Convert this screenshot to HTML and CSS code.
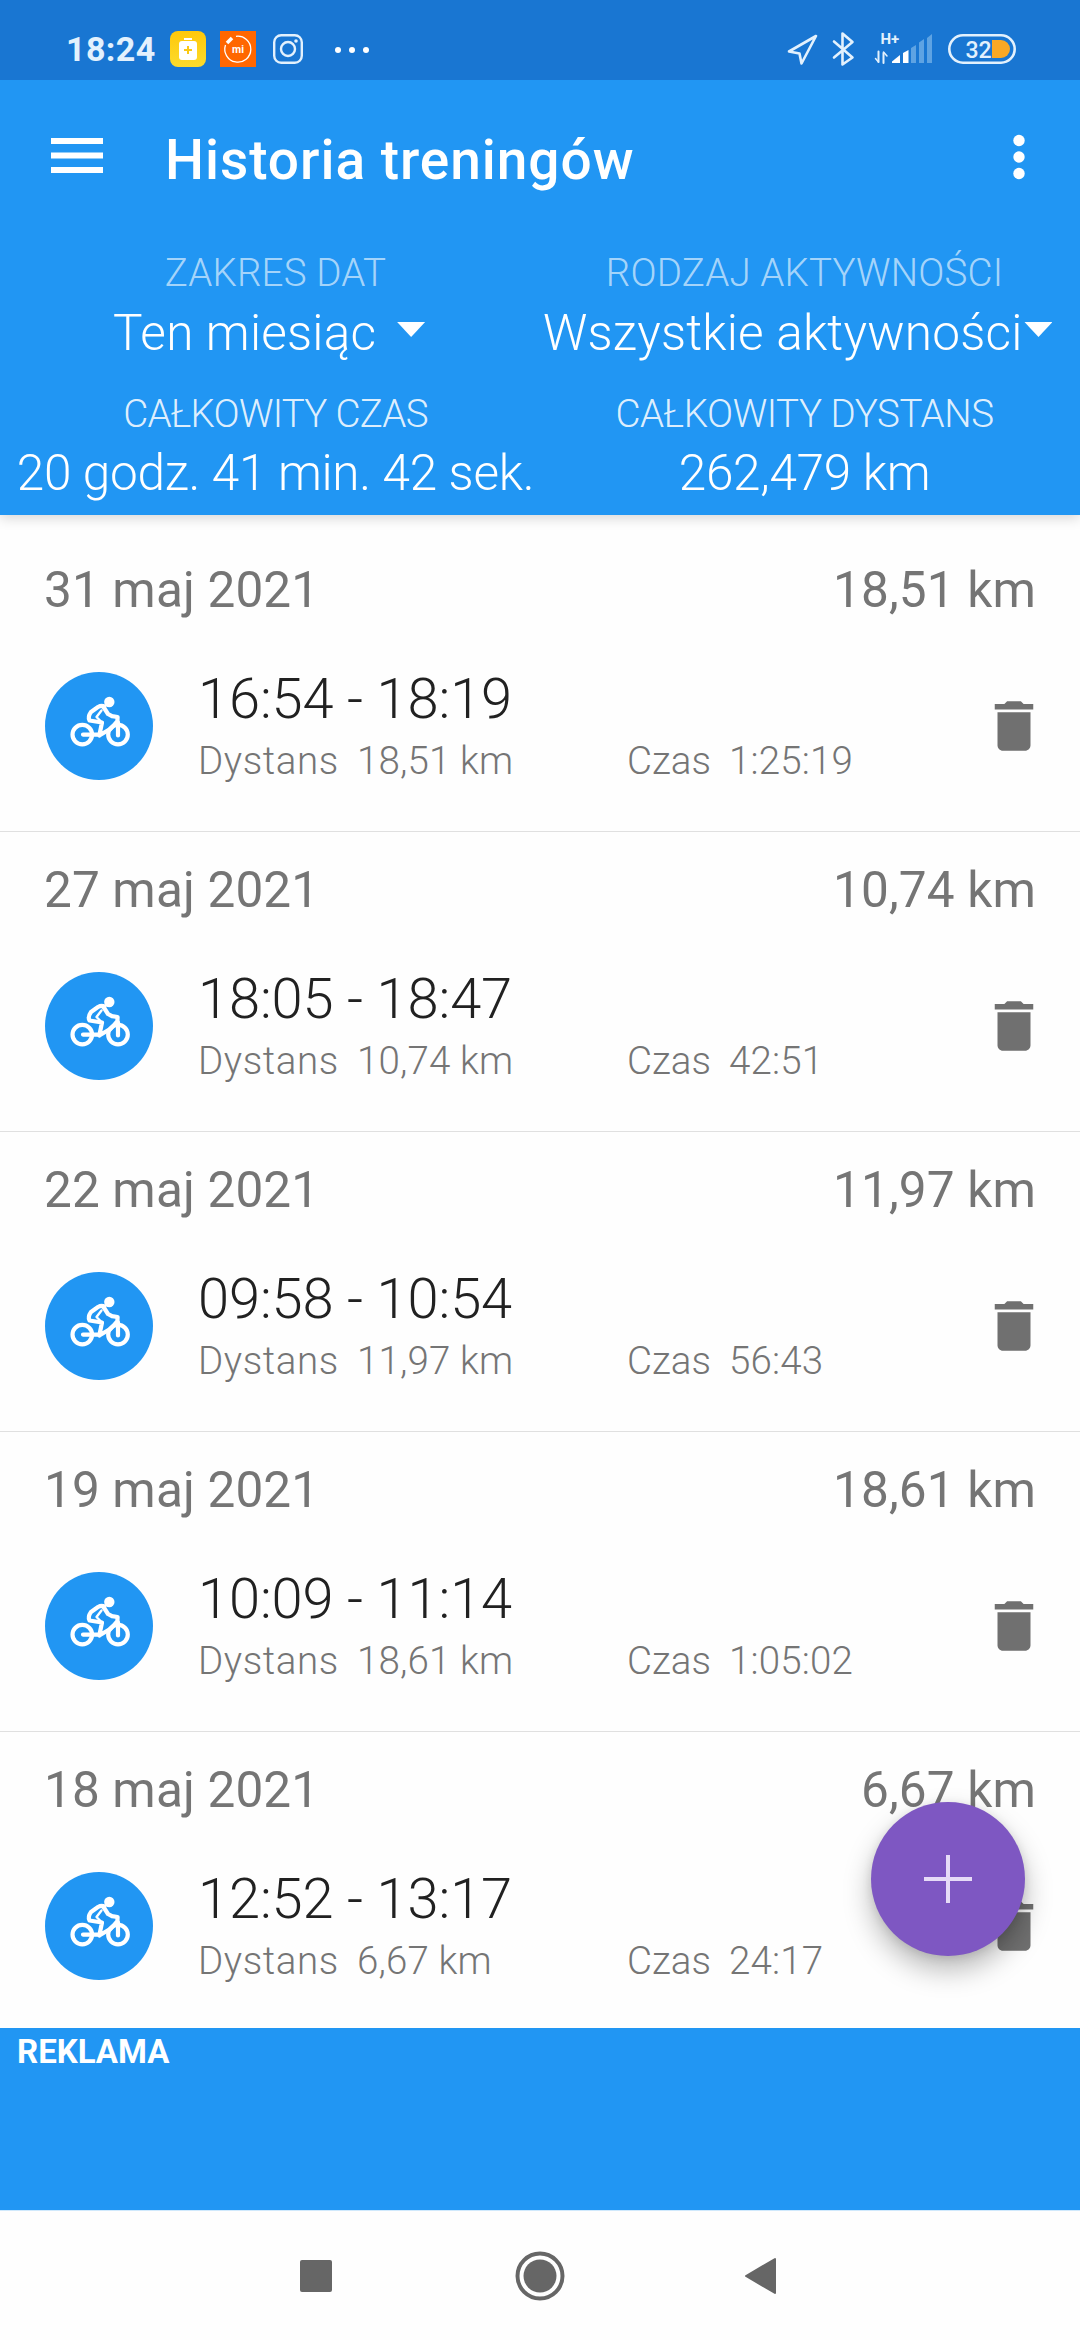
FILE: index.html
```html
<!DOCTYPE html>
<html lang="pl">
<head>
<meta charset="utf-8">
<title>Historia treningów</title>
<link rel="stylesheet" href="styles.css">
</head>
<body>
<svg class="sprite" aria-hidden="true">
  <symbol id="bike" viewBox="0 0 108 108">
    <circle cx="54" cy="54" r="54" fill="#2196f3"/>
    <circle cx="64.3" cy="30" r="5.2" fill="#fff"/>
    <g fill="none" stroke="#fff" stroke-width="4.2" stroke-linecap="round" stroke-linejoin="round">
      <circle cx="37.3" cy="62.6" r="9.800"/>
      <circle cx="73" cy="62.6" r="9.800"/>
      <path d="M59.5 34.5Q56.500 33 53 35L46 40Q42.500 45 44.500 48.500L57 50.500L54.300 63.500M58.500 35L63 42L67 44.200L72.600 45L72.400 49L66 56.500L54.300 63.500M38 62.600H54M73 63.500V50"/>
      <path d="M56.500 38.500L51.500 45L55.500 49" stroke-width="2.400"/>
    </g>
  </symbol>
  <symbol id="trash" viewBox="0 0 24 24">
    <path fill="#707070" d="M6 19c0 1.100.900 2 2 2h8c1.100 0 2-.900 2-2V7H6v12zM19 4h-3.500l-1-1h-5l-1 1H5v2h14V4z"/>
  </symbol>
</svg>

<header class="header">
  <div class="status">
    <span class="clock">18:24</span>
    <svg class="app-icon" viewBox="0 0 36 36">
      <defs><linearGradient id="gold" x2="0" y2="1"><stop stop-color="#ffc80a"/><stop offset="1" stop-color="#fcdb2c"/></linearGradient></defs>
      <rect width="36" height="36" rx="8" fill="url(#gold)"/>
      <path d="M14 7h8v2h-8z" fill="#fff"/><rect x="9" y="10" width="18" height="19" rx="3" fill="#fff"/>
      <path d="M18 15v8M14 19h8" stroke="#fbc914" stroke-width="2"/>
    </svg>
    <svg class="app-icon" viewBox="0 0 36 36">
      <rect width="36" height="36" fill="#ff6700"/>
      <path d="M16 5.300A13 13 0 1 1 5.500 14" fill="none" stroke="#fff" stroke-width="1.300"/>
      <path d="M7 12L12 7" stroke="#fff" stroke-width="3.600"/>
      <text class="mi" x="18" y="22">mi</text>
    </svg>
    <svg class="insta" viewBox="0 0 30 30" fill="none" stroke="#e3f1fd" stroke-width="2.400">
      <rect x="1.200" y="1.200" width="27.600" height="27.600" rx="7"/><circle cx="15" cy="15" r="7"/><circle cx="23" cy="7" r="1.800" fill="#e3f1fd" stroke="none"/>
    </svg>
    <svg class="more" viewBox="0 0 34 6" fill="#fff"><circle cx="3" cy="3" r="3"/><circle cx="17" cy="3" r="3"/><circle cx="31" cy="3" r="3"/></svg>
    <svg class="indicators" viewBox="787 30 230 38" fill="none" stroke="#e3f1fd" stroke-width="2.600" stroke-linejoin="round" stroke-linecap="round">
      <path d="M789 51.500L816 36L801.500 63.500L799.500 53.500Z"/>
      <path d="M834 41.500L852.500 57.500L842.500 64.500V33.500L852.500 42L834 57.500"/>
      <text class="net" x="880.500" y="44">H+</text>
      <path d="M878.500 51.500V62M883.500 63V53" stroke-width="2"/>
      <path d="M875.500 58.500L878.500 62M883.500 52L887 56" stroke-width="1.500"/>
      <g stroke="none">
        <path fill="#fff" d="M892 63V61.500L900 55V63Z"/><path fill="#fff" d="M903 63V53L908.500 50V63Z"/>
        <path fill="#5ea3e3" d="M911 63V48L916 45V63ZM919 63V42.500L924 39V63ZM927 63V38L932 34V63Z"/>
        <path fill="#f9a825" d="M992 40H1001A9 9 0 0 1 1001 58H992Z"/>
      </g>
      <rect x="949.300" y="35.300" width="65.400" height="27.400" rx="13.700"/>
      <text class="charge" x="965.500" y="58">32</text>
    </svg>
  </div>

  <div class="appbar">
    <svg class="menu" viewBox="0 0 52 36"><path d="M0 0h52v6H0zM0 14.500h52v6H0zM0 29h52v6H0z" fill="#fff"/></svg>
    <h1 class="title">Historia treningów</h1>
    <svg class="kebab" viewBox="0 0 12 46" fill="#fff"><circle cx="6" cy="6.500" r="5.700"/><circle cx="6" cy="23" r="5.700"/><circle cx="6" cy="39.500" r="5.700"/></svg>
  </div>

  <div class="summary">
    <div class="cell">
      <div class="label dim">ZAKRES DAT</div>
      <div class="value select select-range"><span>Ten miesiąc</span><i class="caret"></i></div>
    </div>
    <div class="cell">
      <div class="label dim">RODZAJ AKTYWNOŚCI</div>
      <div class="value select select-type"><span>Wszystkie aktywności</span><i class="caret"></i></div>
    </div>
    <div class="cell">
      <div class="label total-time">CAŁKOWITY CZAS</div>
      <div class="value total">20 godz. 41 min. 42 sek.</div>
    </div>
    <div class="cell">
      <div class="label total-distance">CAŁKOWITY DYSTANS</div>
      <div class="value total">262,479 km</div>
    </div>
  </div>
</header>

<main class="list">
  <section class="entry">
    <div class="day"><span>31 maj 2021</span><span>18,51 km</span></div>
    <div class="workout">
      <svg class="bike"><use href="#bike"/></svg>
      <div class="info"><div class="hours">16:54 - 18:19</div>
        <div class="facts"><span class="fact">Dystans</span><span class="num">18,51 km</span><span class="fact2">Czas</span><span class="num">1:25:19</span></div></div>
      <svg class="trash"><use href="#trash"/></svg>
    </div>
  </section>
  <section class="entry">
    <div class="day"><span>27 maj 2021</span><span>10,74 km</span></div>
    <div class="workout">
      <svg class="bike"><use href="#bike"/></svg>
      <div class="info"><div class="hours">18:05 - 18:47</div>
        <div class="facts"><span class="fact">Dystans</span><span class="num">10,74 km</span><span class="fact2">Czas</span><span class="num">42:51</span></div></div>
      <svg class="trash"><use href="#trash"/></svg>
    </div>
  </section>
  <section class="entry">
    <div class="day"><span>22 maj 2021</span><span>11,97 km</span></div>
    <div class="workout">
      <svg class="bike"><use href="#bike"/></svg>
      <div class="info"><div class="hours">09:58 - 10:54</div>
        <div class="facts"><span class="fact">Dystans</span><span class="num">11,97 km</span><span class="fact2">Czas</span><span class="num">56:43</span></div></div>
      <svg class="trash"><use href="#trash"/></svg>
    </div>
  </section>
  <section class="entry">
    <div class="day"><span>19 maj 2021</span><span>18,61 km</span></div>
    <div class="workout">
      <svg class="bike"><use href="#bike"/></svg>
      <div class="info"><div class="hours">10:09 - 11:14</div>
        <div class="facts"><span class="fact">Dystans</span><span class="num">18,61 km</span><span class="fact2">Czas</span><span class="num">1:05:02</span></div></div>
      <svg class="trash"><use href="#trash"/></svg>
    </div>
  </section>
  <section class="entry">
    <div class="day"><span>18 maj 2021</span><span>6,67 km</span></div>
    <div class="workout">
      <svg class="bike"><use href="#bike"/></svg>
      <div class="info"><div class="hours">12:52 - 13:17</div>
        <div class="facts"><span class="fact">Dystans</span><span class="num">6,67 km</span><span class="fact2">Czas</span><span class="num">24:17</span></div></div>
      <svg class="trash"><use href="#trash"/></svg>
    </div>
  </section>
  <div class="fab"><svg width="50" height="50" viewBox="0 0 50 50"><path d="M25 1v48M1 25h48" stroke="#e6dbf7" stroke-width="4"/></svg></div>
</main>

<aside class="ad">REKLAMA</aside>

<nav class="navbar">
  <svg class="recent" viewBox="0 0 32 32"><rect width="32" height="32" rx="2" fill="#666"/></svg>
  <svg class="home" viewBox="0 0 50 50"><circle cx="25" cy="25" r="22.500" fill="none" stroke="#666" stroke-width="4"/><circle cx="25" cy="25" r="16.500" fill="#666"/></svg>
  <svg class="back" viewBox="0 0 32 38"><path d="M31 2V36L2 19Z" fill="#666" stroke="#666" stroke-width="2" stroke-linejoin="round"/></svg>
</nav>
</body>
</html>
```
FILE: styles.css
```css
* { box-sizing: border-box; }
body {
  margin: 0;
  width: 1080px;
  height: 2340px;
  display: flex;
  flex-direction: column;
  overflow: hidden;
  background: #fefefe;
  font-family: Roboto, "Liberation Sans", sans-serif;
}
svg { display: block; flex: none; }
.sprite { width: 0; height: 0; position: absolute; }

.header {
  flex: none;
  height: 515px;
  background: #2196f3;
  color: #fff;
  box-shadow: 0 3px 12px rgba(0, 0, 0, .16);
  z-index: 1;
}
.status {
  height: 80px;
  padding: 18px 63px 0 66px;
  background: #1976d2;
  display: flex;
  align-items: center;
}
.clock { width: 104px; font-size: 34px; line-height: 40px; font-weight: 700; letter-spacing: .4px; color: #e3f1fd; }
.app-icon { width: 36px; height: 36px; margin-right: 14px; }
.insta { width: 30px; height: 30px; margin-left: 3px; }
.more { width: 34px; height: 6px; margin-left: 32px; margin-top: 2px; }
.indicators { width: 230px; height: 38px; margin-left: auto; }
.indicators text { fill: #e3f1fd; stroke: none; }
.mi { font-size: 10.500px; font-weight: 700; fill: #fff; text-anchor: middle; }
.net { font-size: 15px; font-weight: 700; }
.charge { font-size: 23px; font-weight: 500; }

.appbar {
  height: 165px;
  padding: 0 55px 5px 51px;
  display: flex;
  align-items: center;
}
.menu { width: 52px; height: 36px; margin-top: -8px; }
.title { margin: 0 auto 0 62px; font-size: 55px; font-weight: 500; line-height: 64px; letter-spacing: .96px; }
.kebab { width: 12px; height: 46px; margin-top: -6px; }

.summary {
  padding: 0 11px;
  display: grid;
  grid-template-columns: 1fr 1fr;
  row-gap: 21px;
  text-align: center;
  white-space: nowrap;
  font-weight: 300;
}
.label { font-size: 38.500px; line-height: 56px; color: rgba(255, 255, 255, .87); }
.label.dim { color: rgba(255, 255, 255, .62); letter-spacing: .18px; }
.total-time { letter-spacing: -.7px; }
.total-distance { letter-spacing: -.4px; }
.value { font-size: 49.500px; line-height: 64px; letter-spacing: .2px; }
.total { margin-top: -1px; letter-spacing: -.3px; }
.select { display: flex; align-items: center; }
.select-range { padding-left: 102px; gap: 21px; }
.select-type { padding-left: 3px; gap: 2px; }
.caret { flex: none; width: 28px; height: 15px; margin-top: -7px; background: #fff; clip-path: polygon(0 0, 100% 0, 50% 100%); }

.list { position: relative; flex: none; height: 1513px; padding-top: 17px; overflow: hidden; }
.entry { height: 300px; padding: 18px 42px 0 44px; border-bottom: 1px solid #e0e0e0; }
.day { display: flex; justify-content: space-between; padding-right: 2px; font-size: 49.500px; line-height: 80px; letter-spacing: .15px; color: #757575; }
.workout { display: flex; align-items: flex-start; height: 108px; margin-top: 42px; }
.bike { width: 108px; height: 108px; margin-left: 1px; }
.info { flex: 1; margin: -4px 0 0 45px; font-weight: 300; white-space: nowrap; }
.hours { font-size: 56px; line-height: 62px; letter-spacing: -.1px; color: #212121; }
.facts { margin-top: 8px; display: grid; grid-template-columns: 159px 270px 102px 1fr; font-size: 38.500px; line-height: 46px; color: #757575; }
.fact { letter-spacing: .6px; }
.num { letter-spacing: .15px; }
.trash { width: 66px; height: 66px; margin: 21px -9px 0 0; }
.fab {
  position: absolute;
  left: 871px;
  top: 1287px;
  width: 154px;
  height: 154px;
  border-radius: 50%;
  background: #7e57c2;
  box-shadow: 0 14px 28px rgba(0, 0, 0, .28), 0 2px 10px rgba(0, 0, 0, .1);
  display: grid;
  place-items: center;
}

.ad {
  flex: none;
  height: 183px;
  padding: 4px 17px;
  background: #2196f3;
  border-bottom: 1px solid #d0e9fc;
  color: #fff;
  font-size: 33px;
  font-weight: 700;
  line-height: 40px;
}
.navbar { flex: 1; display: flex; align-items: center; padding-left: 300px; }
.recent { width: 32px; height: 32px; }
.home { width: 50px; height: 50px; margin-left: 183px; }
.back { width: 32px; height: 38px; margin-left: 179px; }
```
